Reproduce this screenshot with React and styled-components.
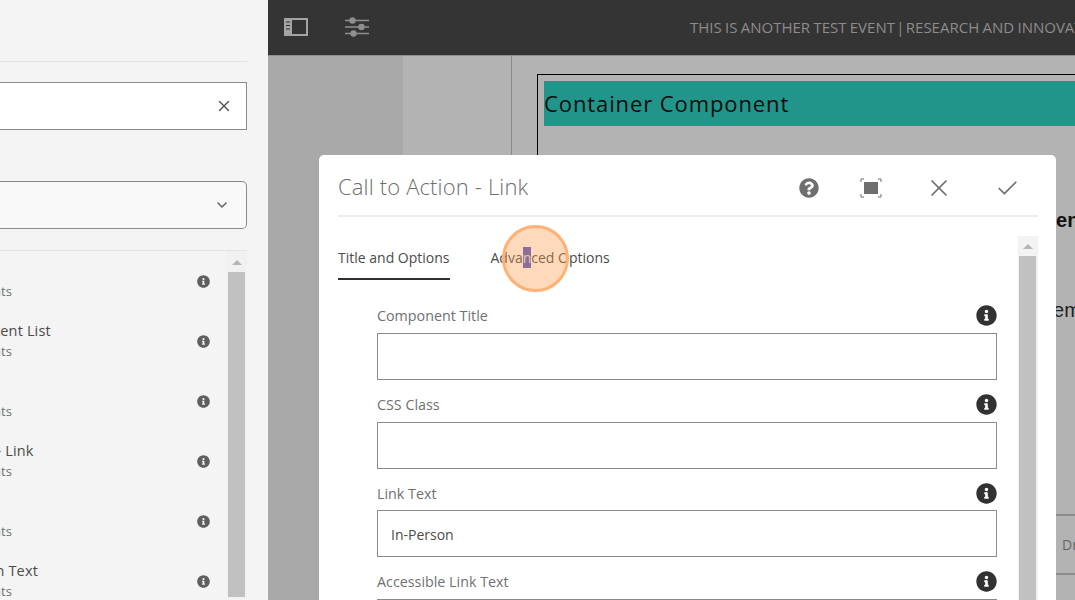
import React from 'react';
import styled, { createGlobalStyle } from 'styled-components';
import { FaInfoCircle, FaQuestionCircle } from 'react-icons/fa';
import { X, Check, ChevronDown } from 'lucide-react';

const items = [
  { title: '' },
  { title: 'Featured Content List' },
  { title: '' },
  { title: 'Call to Action - Link' },
  { title: '' },
  { title: 'Content Action Text' },
];

const fields = [
  { label: 'Component Title', value: '' },
  { label: 'CSS Class', value: '' },
  { label: 'Link Text', value: 'In-Person' },
  { label: 'Accessible Link Text', value: '' },
];

const PanelIcon = () => (
  <svg width="24" height="18" viewBox="0 0 24 18">
    <rect width="24" height="18" fill="#a3a3a3" />
    <rect x="8" y="2" width="14" height="14" fill="#343434" />
    <path d="M2 4h4M2 7.5h4M2 11h4" stroke="#343434" strokeWidth="1" />
  </svg>
);

const SlidersIcon = () => (
  <svg width="24" height="20" viewBox="0 0 24 20" fill="#8f8f8f">
    <path d="M0 3.5h24M0 10h24M0 16.500h24" stroke="#8f8f8f" strokeWidth="1.300" />
    <circle cx="7.500" cy="3.500" r="3.200" />
    <circle cx="16.500" cy="10" r="3.200" />
    <circle cx="8.500" cy="16.500" r="3.200" />
  </svg>
);

const FullscreenIcon = () => (
  <svg width="22" height="20" viewBox="0 0 22 20" fill="none">
    <path d="M4 1H1v3M18 1h3v3M4 19H1v-3M18 19h3v-3" stroke="#6e6e6e" strokeWidth="1" />
    <rect x="4" y="4" width="14" height="12" fill="#6e6e6e" />
  </svg>
);

const App = () => {
  return (
    <Screen>
      <GlobalStyle />
      <Sidebar>
        <SearchBox>
          <X size={18} color="#555" strokeWidth={1.900} />
        </SearchBox>
        <SelectBox>
          <ChevronDown size={16} color="#666" strokeWidth={2.400} />
        </SelectBox>
        <List>
          <Rows>
            {items.map((item, i) => (
              <Row key={i}>
                <RowText>
                  <RowTitle>{item.title}</RowTitle>
                  <RowSub>Core Components</RowSub>
                </RowText>
                <FaInfoCircle size={13} color="#5f5f5f" />
              </Row>
            ))}
          </Rows>
          <Scrollbar $width="21px" $pad="2px" $track="#f1f1f1">
            <ScrollArrow />
            <ScrollThumb />
          </Scrollbar>
        </List>
      </Sidebar>

      <Main>
        <TopBar>
          <BarIcon><PanelIcon /></BarIcon>
          <BarIcon><SlidersIcon /></BarIcon>
          <PageName>THIS IS ANOTHER TEST EVENT <Divider>|</Divider> RESEARCH AND INNOVATION</PageName>
        </TopBar>
        <Canvas>
          <Rail />
          <Gutter />
          <PageArea>
            <Outline>
              <Band>Container Component</Band>
              <PageHeading>Component</PageHeading>
              <PageText>Item</PageText>
              <PageRow>Draft</PageRow>
            </Outline>
          </PageArea>
        </Canvas>
      </Main>

      <Dialog>
        <DialogHeader>
          <DialogTitle>Call to Action - Link</DialogTitle>
          <HeaderIcon $w="56px"><FaQuestionCircle size={20} color="#6e6e6e" /></HeaderIcon>
          <HeaderIcon $w="68px"><FullscreenIcon /></HeaderIcon>
          <HeaderIcon $w="68px"><X size={28} color="#6e6e6e" strokeWidth={1.500} /></HeaderIcon>
          <HeaderIcon $w="68px"><Check size={25} color="#6e6e6e" strokeWidth={1.600} /></HeaderIcon>
        </DialogHeader>
        <DialogBody>
          <Form>
            <Tabs>
              <Tab $active>Title and Options</Tab>
              <Tab>Adva<Selected>n</Selected>ced Options</Tab>
            </Tabs>
            <Fields>
              {fields.map((f) => (
                <Field key={f.label}>
                  <LabelRow>
                    <Label>{f.label}</Label>
                    <FaInfoCircle size={21} color="#323232" />
                  </LabelRow>
                  <Input>{f.value}</Input>
                </Field>
              ))}
            </Fields>
          </Form>
          <Scrollbar $width="20px" $pad="1px 2px 1px 1px" $track="#f3f3f3">
            <ScrollArrow />
            <ScrollThumb />
          </Scrollbar>
        </DialogBody>
      </Dialog>

      <ClickMark />
    </Screen>
  );
};

export default App;

const GlobalStyle = createGlobalStyle`
  html, body {
    margin: 0;
    padding: 0;
    overflow: hidden;
  }
  * {
    box-sizing: border-box;
  }
`;

const Screen = styled.div`
  position: relative;
  width: 1075px;
  height: 600px;
  overflow: hidden;
  display: flex;
  font-family: "Open Sans", "Liberation Sans", sans-serif;
`;

const Sidebar = styled.div`
  width: 268px;
  flex-shrink: 0;
  height: 600px;
  background-color: #f4f4f4;
  padding: 82px 21px 0px 0px;
  position: relative;
  &::before {
    content: '';
    position: absolute;
    top: 61px;
    left: 0;
    width: 247px;
    height: 1px;
    background-color: #e3e3e3;
  }
`;

const SearchBox = styled.div`
  height: 48px;
  background-color: #fff;
  border: 1px solid #8a8a8a;
  border-left: 0;
  display: flex;
  align-items: center;
  justify-content: flex-end;
  padding-right: 13px;
`;

const SelectBox = styled.div`
  height: 48px;
  margin-top: 51px;
  background-color: #f9f9f9;
  border: 1px solid #8a8a8a;
  border-left: 0;
  border-radius: 0px 5px 5px 0px;
  display: flex;
  align-items: center;
  justify-content: flex-end;
  padding-right: 16px;
`;

const List = styled.div`
  margin-top: 21px;
  border-top: 1px solid #e3e3e3;
  display: flex;
  height: 349px;
  overflow: hidden;
`;

const Rows = styled.div`
  flex: 1;
  min-width: 0;
`;

const Row = styled.div`
  height: 60px;
  padding-right: 16px;
  display: flex;
  align-items: center;
  justify-content: space-between;
  overflow: hidden;
`;

const RowText = styled.div`
  margin-left: -98px;
  white-space: nowrap;
`;

const RowTitle = styled.div`
  height: 20px;
  line-height: 20px;
  font-size: 14.500px;
  letter-spacing: 0.150px;
  color: #4b4b4b;
`;

const RowSub = styled.div`
  height: 20px;
  line-height: 20px;
  font-size: 13px;
  color: #707070;
`;

const Scrollbar = styled.div`
  width: ${(p) => p.$width};
  flex-shrink: 0;
  padding: ${(p) => p.$pad};
  background-color: ${(p) => p.$track};
  display: flex;
  flex-direction: column;
`;

const ScrollArrow = styled.div`
  height: 19px;
  flex-shrink: 0;
  display: flex;
  align-items: center;
  justify-content: center;
  &::before {
    content: '';
    border-left: 5px solid transparent;
    border-right: 5px solid transparent;
    border-bottom: 5px solid #b5b5b5;
  }
`;

const ScrollThumb = styled.div`
  flex: 1;
  background-color: #c1c1c1;
`;

const Main = styled.div`
  flex: 1;
  min-width: 0;
  display: flex;
  flex-direction: column;
`;

const TopBar = styled.div`
  height: 56px;
  flex-shrink: 0;
  background-color: #343434;
  border-bottom: 1px solid #8f8f8f;
  display: flex;
  align-items: center;
  padding: 0px 0px 2px 16px;
  gap: 37px;
`;

const BarIcon = styled.div`
  display: flex;
  width: 24px;
`;

const PageName = styled.div`
  margin-left: 284px;
  font-size: 15px;
  word-spacing: -0.600px;
  color: #8c8c8c;
  white-space: nowrap;
`;

const Divider = styled.span`
  margin: 0px -2px;
`;

const Canvas = styled.div`
  flex: 1;
  display: flex;
  background-color: #b3b3b3;
`;

const Rail = styled.div`
  width: 135px;
  background-color: #a9a9a9;
`;

const Gutter = styled.div`
  width: 109px;
  border-right: 1px solid #8c8c8c;
`;

const PageArea = styled.div`
  flex: 1;
  min-width: 0;
  padding: 18px 0px 0px 25px;
`;

const Outline = styled.div`
  width: 700px;
  height: 600px;
  border: 1px solid #000;
  padding: 6px;
`;

const Band = styled.div`
  height: 45px;
  background-color: #21958a;
  color: #0c0c0c;
  font-size: 22px;
  line-height: 45px;
  letter-spacing: 0.900px;
`;

const PageHeading = styled.div`
  margin: 82px 0px 0px 431px;
  font-family: "Liberation Sans", sans-serif;
  font-size: 20px;
  font-weight: 700;
  line-height: 24px;
  color: #111;
`;

const PageText = styled.div`
  margin: 66px 0px 0px 498px;
  font-family: "Liberation Sans", sans-serif;
  font-size: 20px;
  line-height: 24px;
  color: #222;
`;

const PageRow = styled.div`
  margin-top: 192px;
  height: 61px;
  border-top: 2px solid #8c8c8c;
  border-bottom: 2px solid #8c8c8c;
  padding-left: 518px;
  line-height: 57px;
  font-size: 14px;
  color: #666;
`;

const Dialog = styled.div`
  position: absolute;
  left: 319px;
  top: 155px;
  width: 737px;
  height: 470px;
  padding: 0px 18px 0px 19px;
  background-color: #fff;
  border-radius: 5px;
`;

const DialogHeader = styled.div`
  position: relative;
  height: 62px;
  padding: 6px 0px 0px 443px;
  border-bottom: 2px solid #eeeeee;
  display: flex;
  align-items: center;
`;

const DialogTitle = styled.div`
  position: absolute;
  left: 0;
  top: 15px;
  font-size: 22px;
  font-weight: 300;
  letter-spacing: 0.150px;
  line-height: 32px;
  color: #6e6e6e;
  white-space: nowrap;
`;

const HeaderIcon = styled.div`
  width: ${(p) => p.$w};
  flex-shrink: 0;
  display: flex;
  justify-content: center;
`;

const DialogBody = styled.div`
  margin-top: 19px;
  display: flex;
  height: 400px;
`;

const Form = styled.div`
  flex: 1;
  min-width: 0;
`;

const Tabs = styled.div`
  height: 44px;
  display: flex;
  gap: 41px;
`;

const Tab = styled.div`
  height: 44px;
  line-height: 43px;
  font-size: 14px;
  color: #4b4b4b;
  border-bottom: ${(p) => (p.$active ? '2px solid #2f2f2f' : '0')};
  white-space: nowrap;
`;

const Selected = styled.span`
  display: inline-block;
  line-height: 21px;
  background-color: #4959c9;
  color: #dfe2ff;
`;

const Fields = styled.div`
  padding: 11.330px 21px 0px 39px;
`;

const Field = styled.div`
  padding-top: 11.670px;
`;

const LabelRow = styled.div`
  height: 24px;
  padding-top: 2px;
  margin-bottom: 6px;
  display: flex;
  align-items: center;
  justify-content: space-between;
`;

const Label = styled.div`
  font-size: 14.300px;
  color: #707070;
`;

const Input = styled.div`
  height: 47px;
  border: 1px solid #8a8a8a;
  padding-left: 13px;
  line-height: 47px;
  font-size: 14px;
  color: #4b4b4b;
`;

const ClickMark = styled.div`
  position: absolute;
  left: 502px;
  top: 225px;
  width: 67px;
  height: 67px;
  border-radius: 50%;
  background-color: rgba(255, 150, 70, 0.36);
  border: 3px solid #ffb273;
`;
